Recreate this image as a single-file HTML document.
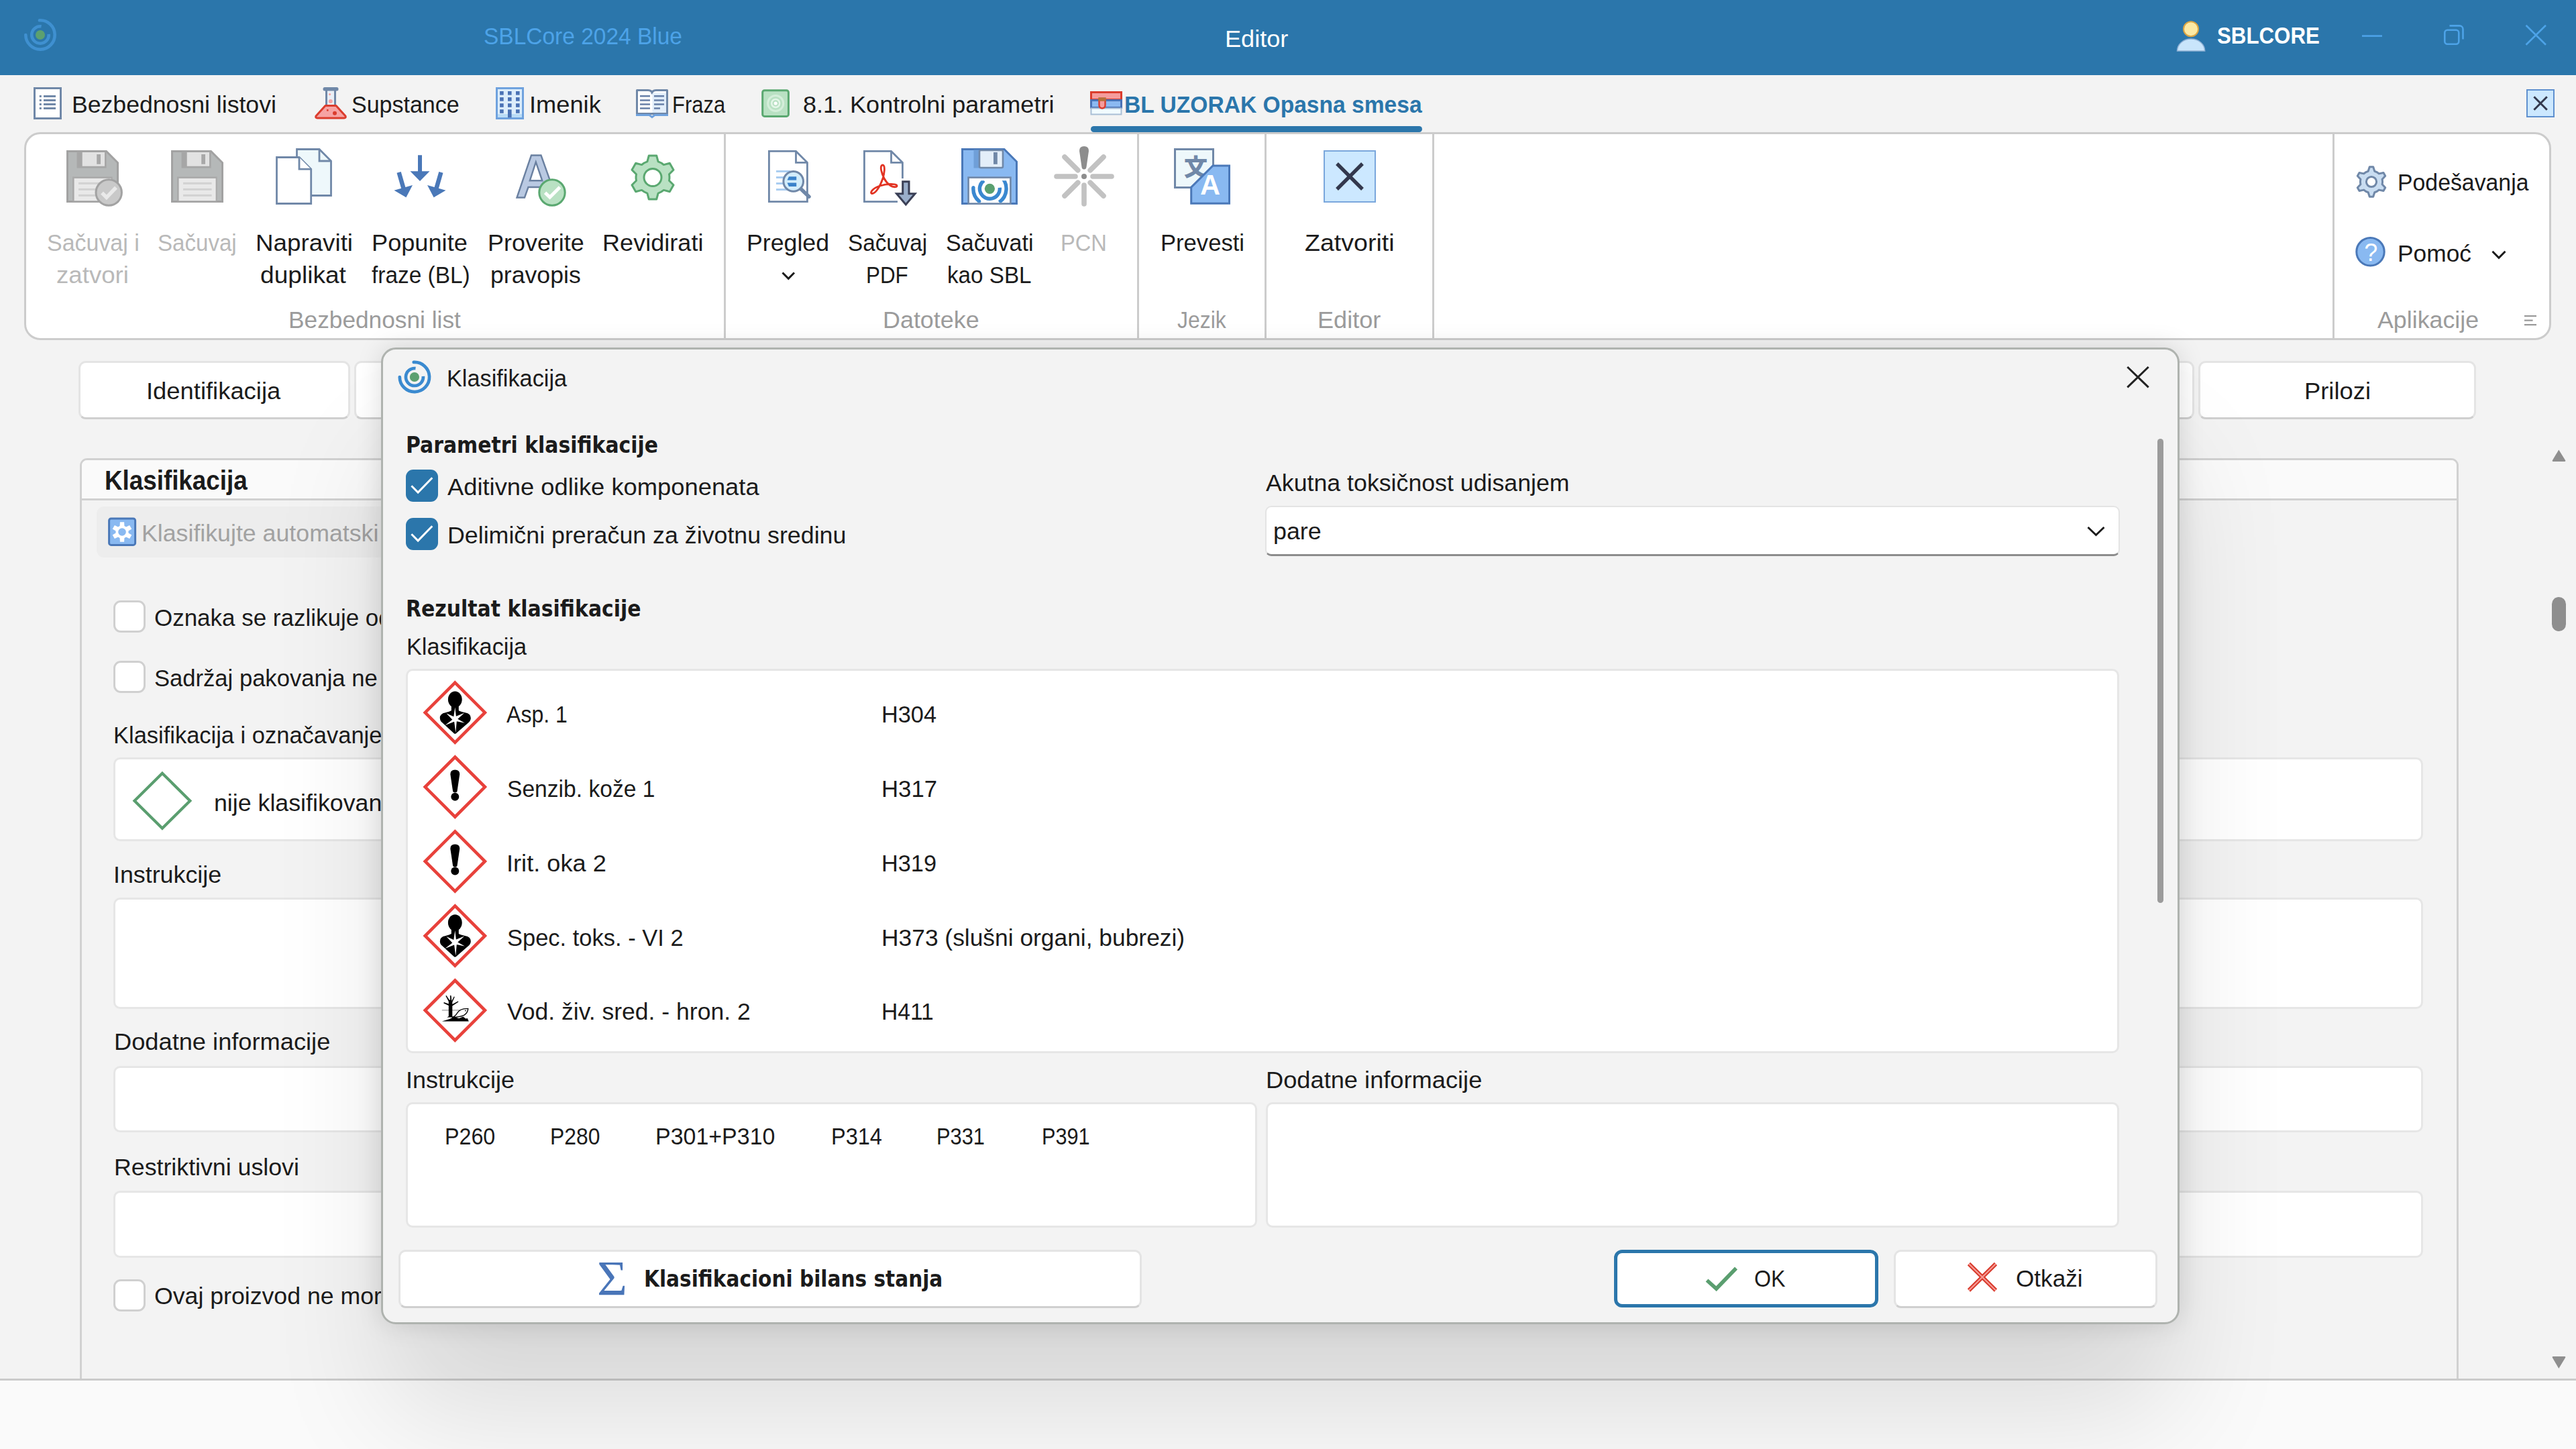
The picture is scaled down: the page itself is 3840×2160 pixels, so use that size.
<!DOCTYPE html>
<html lang="sr"><head><meta charset="utf-8"><title>SBLCore 2024 Blue - Editor</title>
<style>
html,body{margin:0;padding:0;background:#f3f3f3;}
body{width:3840px;height:2160px;overflow:hidden;font-family:"Liberation Sans",sans-serif;color:#1b1b1b;}
#app{position:relative;width:3840px;height:2160px;overflow:hidden;background:#f3f3f3;}
.t{position:absolute;white-space:pre;line-height:1;transform-origin:0 0;}
.a{position:absolute;box-sizing:border-box;}
svg{position:absolute;overflow:visible;}
.btn{background:#fff;border:3px solid #e4e4e4;border-bottom-color:#cfcfcf;border-radius:11px;}
.fld{background:#fff;border:3px solid #e6e6e6;border-radius:10px;}
.cb{background:#fff;border:3px solid #d0d0d0;border-radius:11px;}
.cbx{background:#2b76ab;border-radius:11px;}
.vsep{background:#cccccc;width:3px;}

</style></head><body>
<div id="app">
<!-- title bar -->
<div class="a" style="left:0;top:0;width:3840px;height:112px;background:#2b76ab"></div>
<!-- ribbon panel -->
<div class="a" style="left:36px;top:197px;width:3767px;height:310px;background:#fff;border:3px solid #cccccc;border-radius:24px"></div>
<div class="a vsep" style="left:1079px;top:200px;height:304px"></div>
<div class="a vsep" style="left:1695px;top:200px;height:304px"></div>
<div class="a vsep" style="left:1885px;top:200px;height:304px"></div>
<div class="a vsep" style="left:2135px;top:200px;height:304px"></div>
<div class="a vsep" style="left:3477px;top:200px;height:304px"></div>
<!-- active tab underline -->
<div class="a" style="left:1626px;top:188px;width:494px;height:9px;background:#2b76ab;border-radius:5px"></div>
<!-- tab close button -->
<div class="a" style="left:3766px;top:133px;width:42px;height:42px;background:#cce8ff;border:2px solid #5f90cf"></div>
<!-- Zatvoriti icon box -->
<div class="a" style="left:1973px;top:224px;width:78px;height:78px;background:#cce8ff;border:2px solid #7aa7dc"></div>
<!-- section buttons -->
<div class="a btn" style="left:117px;top:538px;width:405px;height:87px"></div>
<div class="a btn" style="left:528px;top:538px;width:405px;height:87px"></div>
<div class="a btn" style="left:2866px;top:538px;width:405px;height:87px"></div>
<div class="a btn" style="left:3277px;top:538px;width:414px;height:87px"></div>
<!-- group box -->
<div class="a" style="left:119px;top:683px;width:3546px;height:1500px;border:3px solid #d1d1d1;border-radius:11px;background:#f3f3f3"></div>
<div class="a" style="left:122px;top:686px;width:3540px;height:57px;background:#fafafa;border-radius:8px 8px 0 0;border-bottom:3px solid #d1d1d1;box-sizing:content-box"></div>
<!-- toolbar strip -->
<div class="a" style="left:144px;top:755px;width:3000px;height:76px;background:#ededed;border-radius:11px"></div>
<!-- checkboxes -->
<div class="a cb" style="left:169px;top:895px;width:48px;height:48px"></div>
<div class="a cb" style="left:169px;top:985px;width:48px;height:48px"></div>
<div class="a cb" style="left:169px;top:1907px;width:48px;height:48px"></div>
<!-- fields -->
<div class="a fld" style="left:169px;top:1129px;width:3443px;height:125px"></div>
<div class="a fld" style="left:169px;top:1338px;width:3443px;height:166px"></div>
<div class="a fld" style="left:169px;top:1589px;width:3443px;height:99px"></div>
<div class="a fld" style="left:169px;top:1775px;width:3443px;height:100px"></div>
<!-- main scrollbar -->
<svg style="left:3800px;top:660px" width="30" height="1400" viewBox="0 0 30 1400"><path d="M14.3 10.5 L24 26 Q25 28 23 28 L6 28 Q4 28 5 26 Z" fill="#8e8e8e"/><rect x="4" y="230" width="21" height="51" rx="10.5" fill="#8e8e8e"/><path d="M14.3 1380 L24 1364 Q25 1362 23 1362 L6 1362 Q4 1362 5 1364 Z" fill="#8e8e8e"/></svg>
<!-- bottom bar -->
<div class="a" style="left:0;top:2055px;width:3840px;height:105px;background:#fafafa;border-top:3px solid #cbcbcb"></div>

<svg style="left:0;top:0" width="3840" height="2160" viewBox="0 0 3840 2160">
<g fill="none" stroke="#3f90d0" stroke-width="4.6" opacity="1"><path d="M58.9 30.3A21.7 21.7 0 1 1 38.3 52.0" stroke-linecap="round"/><path d="M61.6 39.3A12.75 12.75 0 1 0 72.7 50.9"/></g><circle cx="60" cy="52" r="7.0" fill="#5ca070"/>
<path d="M3245.5 76 A20.6 18 0 0 1 3286.7 76 Z" fill="#c9e5fb" stroke="#8fb0d4" stroke-width="1.5"/>
<circle cx="3266" cy="43.2" r="11" fill="#fce9a4" stroke="#dba544" stroke-width="2"/>
<g fill="none" stroke="#4da3e8" stroke-width="2.6"><path d="M3521 53.6H3551"/><rect x="3644.3" y="44.7" width="21" height="21" rx="4"/><path d="M3651.5 38.4H3666.5a5 5 0 0 1 5 5V58.5" /><path d="M3765.5 37.8L3795 66.8M3795 37.8L3765.5 66.8"/></g>
<rect x="51.5" y="131.5" width="39" height="45" fill="#fff" stroke="#7088a8" stroke-width="3"/>
<path d="M58.8 143.4h3M65 143.4h18" stroke="#7088a8" stroke-width="3"/>
<path d="M58.8 149.5h3M65 149.5h18" stroke="#7088a8" stroke-width="3"/>
<path d="M58.8 155.5h3M65 155.5h18" stroke="#7088a8" stroke-width="3"/>
<path d="M58.8 161.5h3M65 161.5h18" stroke="#7088a8" stroke-width="3"/>
<rect x="485" y="136" width="16" height="22" fill="#e9eff6"/><path d="M486.5 134V157M499.5 134V157" stroke="#7088a8" stroke-width="3"/><rect x="481.5" y="130" width="23" height="5.5" rx="2.5" fill="#7088a8"/><path d="M485 157.5H501L515 173Q516 176 513 176H473Q470 176 471 173Z" fill="#f6a3a3" stroke="#db3c2d" stroke-width="3" stroke-linejoin="round"/><circle cx="491.6" cy="140.6" r="1.6" fill="#f6a3a3"/><circle cx="492.8" cy="151" r="3" fill="#f6a3a3"/><circle cx="499" cy="168.8" r="3" fill="#db3c2d"/><rect x="487" y="163" width="2.6" height="2.6" fill="#db3c2d"/>
<rect x="740.5" y="131.5" width="39" height="45" fill="#dcedfb" stroke="#6fa2de" stroke-width="3"/><rect x="742" y="170" width="36" height="5" fill="#b9dcf7"/>
<rect x="745.1" y="136.0" width="5.6" height="5.6" fill="#4a72b5"/>
<rect x="745.1" y="145.1" width="5.6" height="5.6" fill="#4a72b5"/>
<rect x="745.1" y="154.2" width="5.6" height="5.6" fill="#4a72b5"/>
<rect x="745.1" y="163.2" width="5.6" height="5.6" fill="#4a72b5"/>
<rect x="757.0" y="136.0" width="5.6" height="5.6" fill="#4a72b5"/>
<rect x="757.0" y="145.1" width="5.6" height="5.6" fill="#4a72b5"/>
<rect x="757.0" y="154.2" width="5.6" height="5.6" fill="#4a72b5"/>
<rect x="769.0" y="136.0" width="5.6" height="5.6" fill="#4a72b5"/>
<rect x="769.0" y="145.1" width="5.6" height="5.6" fill="#4a72b5"/>
<rect x="769.0" y="154.2" width="5.6" height="5.6" fill="#4a72b5"/>
<rect x="769.0" y="163.2" width="5.6" height="5.6" fill="#4a72b5"/>
<rect x="757" y="163.3" width="5.6" height="12" fill="#4a72b5"/>
<path d="M949.5 134.5H966Q972 135 972 139Q972 135 978 134.5H994.5V169.5H949.5Z" fill="#fff" stroke="#7088a8" stroke-width="3" stroke-linejoin="round"/><path d="M972.5 139H993V168H972.5Z" fill="#e2eefa"/><path d="M948 171.5H968L972 174.5L976 171.5H996" fill="none" stroke="#6fa2de" stroke-width="3"/>
<path d="M954 143.3h15M975 143.3h15" stroke="#6880a8" stroke-width="2.6"/>
<path d="M954 149.5h15M975 149.5h15" stroke="#6880a8" stroke-width="2.6"/>
<path d="M954 155.5h15M975 155.5h15" stroke="#6880a8" stroke-width="2.6"/>
<path d="M954 161.5h15M975 161.5h9" stroke="#6880a8" stroke-width="2.6"/>
<rect x="1136.7" y="134.8" width="38.7" height="38.6" rx="3" fill="#b9e1c3" stroke="#5aa870" stroke-width="3"/><circle cx="1156.2" cy="154" r="11.5" fill="none" stroke="#d4eeda" stroke-width="3"/><circle cx="1156.2" cy="154" r="6" fill="none" stroke="#e4f6e8" stroke-width="2.5"/><circle cx="1156.2" cy="154" r="2.6" fill="#fff"/>
<rect x="1626.5" y="137.5" width="45" height="11" fill="#f59c9c" stroke="#db3c2d" stroke-width="3"/><rect x="1626.5" y="149.5" width="45" height="11" fill="#8bb9f1" stroke="#4a72b5" stroke-width="3"/><rect x="1626.5" y="161.5" width="45" height="9" fill="#f1fbff" stroke="#a9bfd6" stroke-width="2"/><path d="M1638.5 149V157Q1638.5 161 1643 161.5Q1647.5 161 1647.5 157V149Z" fill="#f59c9c" stroke="#db3c2d" stroke-width="2.4"/><rect x="1637.3" y="145.2" width="11.4" height="5.5" fill="#b5703a"/>
<path d="M3777.4 144.3L3796.8 163.7M3796.8 144.3L3777.4 163.7" stroke="#33384d" stroke-width="3"/>
<path d="M100.5 225.5H158.5L175.5 242.5V300.5H100.5Z" fill="#b5b8b8" stroke="#a2a2a2" stroke-width="3"/><rect x="114.6" y="226" width="44" height="24.5" fill="#a6a6a6"/><rect x="122.7" y="227" width="33.3" height="20.7" fill="#e2e2e2"/><rect x="144.2" y="230" width="5.8" height="14.7" fill="#a8a8a8"/><rect x="108" y="263.4" width="59.6" height="37" fill="#a9a9a9"/><rect x="110.6" y="265.9" width="55" height="33.3" fill="#e9e9e9"/><rect x="117" y="271.8" width="42.6" height="3" fill="#d2d2d2"/><rect x="117" y="280.8" width="42.6" height="3" fill="#d2d2d2"/><rect x="117" y="289.8" width="42.6" height="3" fill="#d2d2d2"/>
<circle cx="162.2" cy="287" r="19.2" fill="#c9c9c9" stroke="#a2a2a2" stroke-width="3"/><path d="M152 287.5L158.8 294.3L173 279.5" fill="none" stroke="#e9e9e9" stroke-width="5.5"/>
<path d="M256.5 225.5H314.5L331.5 242.5V300.5H256.5Z" fill="#b5b8b8" stroke="#a2a2a2" stroke-width="3"/><rect x="270.6" y="226" width="44" height="24.5" fill="#a6a6a6"/><rect x="278.7" y="227" width="33.3" height="20.7" fill="#e2e2e2"/><rect x="300.2" y="230" width="5.8" height="14.7" fill="#a8a8a8"/><rect x="264" y="263.4" width="59.6" height="37" fill="#a9a9a9"/><rect x="266.6" y="265.9" width="55" height="33.3" fill="#e9e9e9"/><rect x="273" y="271.8" width="42.6" height="3" fill="#d2d2d2"/><rect x="273" y="280.8" width="42.6" height="3" fill="#d2d2d2"/><rect x="273" y="289.8" width="42.6" height="3" fill="#d2d2d2"/>
<path d="M442.5 222.5H476L493.5 240V291.5H442.5Z" fill="#eef8fb" stroke="#7088a8" stroke-width="2.8" stroke-linejoin="miter"/><path d="M476 222.5V240H493.5" fill="none" stroke="#7088a8" stroke-width="2.8"/><path d="M412.5 234.5H446L463.7 252.2V303.5H412.5Z" fill="#fff" stroke="#7088a8" stroke-width="2.8"/><path d="M446 234.5V252.2H463.7" fill="#fff" stroke="#7088a8" stroke-width="2.8"/>
<path d="M623.0 231.3L623.0 255.3L611.5 255.3L626.0 270.0L640.5 255.3L629.0 255.3L629.0 231.3Z" fill="#4a78b8"/>
<path d="M591.5 257.7L598.1 280.8L587.5 283.8L605.4 294.3L615.0 275.9L604.4 279.0L597.7 255.9Z" fill="#4a78b8"/>
<path d="M654.3 255.9L647.6 279.0L637.0 275.9L646.6 294.3L664.5 283.8L653.9 280.8L660.5 257.7Z" fill="#4a78b8"/>
<path d="M792 231.5H806.5L829 294.5H816L810.8 279H787.5L782 294.5H770.5Z M789.8 269.3H808.3L798.8 241.5Z" fill="#b9c9e2" stroke="#6a80a0" stroke-width="2.4" fill-rule="evenodd"/>
<circle cx="823" cy="287" r="19.2" fill="#b9e1c3" stroke="#5aa870" stroke-width="3"/><path d="M812.6 287.2L819.6 294L834.6 279" fill="none" stroke="#fff" stroke-width="5"/>
<path d="M964.9 240.9L967.3 232.0L978.7 232.0L981.1 240.9A25 25 0 0 1 989.4 245.6L998.3 243.3L1004.0 253.2L997.5 259.7A25 25 0 0 1 997.5 269.3L1004.0 275.8L998.3 285.7L989.4 283.4A25 25 0 0 1 981.1 288.1L978.7 297.0L967.3 297.0L964.9 288.1A25 25 0 0 1 956.6 283.4L947.7 285.7L942.0 275.8L948.5 269.3A25 25 0 0 1 948.5 259.7L942.0 253.2L947.7 243.3L956.6 245.6A25 25 0 0 1 964.9 240.9Z" fill="#b9e1c3" stroke="#5aa870" stroke-width="3" stroke-linejoin="round"/><circle cx="973" cy="264.5" r="13" fill="#fff" stroke="#5aa870" stroke-width="3"/>
<path d="M1146.4 225.4H1186.5L1203.4 242.3V300.6H1146.4Z" fill="#fff" stroke="#7088a8" stroke-width="2.8"/><path d="M1186.5 225.4V242.3H1203.4" fill="none" stroke="#7088a8" stroke-width="2.8"/>
<path d="M1157 255.4H1178" stroke="#a9cdf1" stroke-width="3"/>
<path d="M1157 264.5H1178" stroke="#a9cdf1" stroke-width="3"/>
<path d="M1157 273.5H1178" stroke="#a9cdf1" stroke-width="3"/>
<path d="M1157 282.6H1178" stroke="#a9cdf1" stroke-width="3"/>
<path d="M1194 281.8L1206 293.2" stroke="#7088a8" stroke-width="5.5" stroke-linecap="round"/><circle cx="1182.7" cy="270.4" r="14.8" fill="#d3edfb" stroke="#7088a8" stroke-width="3"/><path d="M1176 263.2H1187.2V268.6H1173.5Z M1173.5 272.6H1187.2V278H1176Z" fill="#3a82ca"/>
<path d="M1345.4 266V242.3L1328.5 225.4H1288.4V300.6H1338" fill="#fff" stroke="#7088a8" stroke-width="2.8"/><path d="M1328.5 225.4V242.3H1345.4" fill="none" stroke="#7088a8" stroke-width="2.8"/>
<path d="M1318 266C1314 258 1311 247 1315.5 246C1320 245.5 1318.5 258 1316 266C1312 278 1305 289 1299.5 288.5C1296 287 1302 280 1312 277C1322 274 1333 273.5 1336.5 276C1339 279 1332 280 1327 276.5C1323 273.5 1320 270 1318 266Z" fill="none" stroke="#e23322" stroke-width="2.8" stroke-linejoin="round"/>
<path d="M1345.7 270.8H1355V288.8H1364L1350.3 305L1336.6 288.8H1345.7Z" fill="#9aaeca" stroke="#3a3f55" stroke-width="3"/>
<path d="M1434.5 222.5H1497L1515.5 241V303.5H1434.5Z" fill="#89b9f1" stroke="#4a78b8" stroke-width="3"/><rect x="1451.5" y="223.5" width="8" height="27" fill="#6f9fd8"/><rect x="1460" y="224" width="35" height="26" rx="2" fill="#e3eef9" stroke="#6f88a8" stroke-width="2.6"/><rect x="1481" y="227" width="5.8" height="17.8" fill="#7088a8"/><rect x="1443.6" y="264.6" width="62.8" height="39" fill="#fff" stroke="#7088a8" stroke-width="2.6"/><circle cx="1475.4" cy="281.3" r="7.6" fill="#5aa070"/><clipPath id="sblc"><rect x="1445" y="269.3" width="60.5" height="33"/></clipPath><g fill="none" stroke="#3a88d0" stroke-width="5.4" clip-path="url(#sblc)"><path d="M1490.3 279.7A15 15 0 1 1 1466.8 269.0"/><path d="M1450.9 279.6A24.6 24.6 0 0 0 1459.6 300.1" stroke-linecap="round"/><path d="M1492.8 263.9A24.6 24.6 0 0 1 1489.5 301.5"/></g>
<path d="M1629.0 263.0L1657.0 263.0M1625.2 272.2L1645.0 292.0M1606.8 272.2L1587.0 292.0M1603.0 263.0L1575.0 263.0M1606.8 253.8L1587.0 234.0M1625.2 253.8L1645.0 234.0M1616.0 276.0L1616.0 304.0" stroke="#c2c2c2" stroke-width="7.6" stroke-linecap="round" fill="none"/><path d="M1609 225Q1609 218 1616 218Q1623 218 1623 225L1619.5 249Q1619 252.5 1616 252.5Q1613 252.5 1612.5 249Z" fill="#8d8d8d"/><circle cx="1616" cy="263" r="4" fill="#8d8d8d"/>
<rect x="1751.5" y="222.5" width="57" height="57" fill="#eef8fb" stroke="#7088a8" stroke-width="3"/><text x="1765" y="262" font-family="Noto Sans CJK JP, sans-serif" font-weight="900" font-size="35" fill="#7088a8">文</text><path d="M1808 247H1832.5V303.2H1775.7V279.2Z" fill="#89b9f1" stroke="#4a78b8" stroke-width="3"/><text x="1789" y="290.2" font-family="Liberation Sans, sans-serif" font-weight="700" font-size="43" fill="#fff" textLength="30" lengthAdjust="spacingAndGlyphs">A</text>
<path d="M1993 244L2031 282M2031 244L1993 282" stroke="#33384d" stroke-width="5.4"/>
<path d="M1166.5 406.5L1175.3 415.3L1184 406.5" fill="none" stroke="#1b1b1b" stroke-width="3"/>
<path d="M3715.5 374.8L3725 384.3L3734.5 374.8" fill="none" stroke="#1b1b1b" stroke-width="3"/>
<path d="M3530.2 255.2L3532.3 248.7L3537.7 248.7L3539.8 255.2A16.5 16.5 0 0 1 3546.3 258.9L3553.0 257.5L3555.7 262.2L3551.1 267.3A16.5 16.5 0 0 1 3551.1 274.7L3555.7 279.8L3553.0 284.5L3546.3 283.1A16.5 16.5 0 0 1 3539.8 286.8L3537.7 293.3L3532.3 293.3L3530.2 286.8A16.5 16.5 0 0 1 3523.7 283.1L3517.0 284.5L3514.3 279.8L3518.9 274.7A16.5 16.5 0 0 1 3518.9 267.3L3514.3 262.2L3517.0 257.5L3523.7 258.9A16.5 16.5 0 0 1 3530.2 255.2Z" fill="#c9ddf1" stroke="#7088a8" stroke-width="3" stroke-linejoin="round"/><circle cx="3535" cy="271" r="7.6" fill="#fff" stroke="#7088a8" stroke-width="3"/>
<circle cx="3533.5" cy="375.3" r="20.7" fill="#89b9f1" stroke="#4a78b8" stroke-width="3"/><text x="3524.2" y="388.5" font-family="Liberation Sans, sans-serif" font-size="36" fill="#fff">?</text>
<path d="M3763 471.2H3781M3763 477.7H3775.6M3763 484.1H3781" stroke="#9a9a9a" stroke-width="2.2"/>
<rect x="162.6" y="773" width="39" height="39.4" rx="3" fill="#89b9f1" stroke="#4a78b8" stroke-width="3"/><path d="M178.6 784.1L178.9 778.3L185.1 778.3L185.4 784.1A9.5 9.5 0 0 1 188.0 785.6L193.1 783.0L196.3 788.4L191.4 791.5A9.5 9.5 0 0 1 191.4 794.5L196.3 797.6L193.1 803.0L188.0 800.4A9.5 9.5 0 0 1 185.4 801.9L185.1 807.7L178.9 807.7L178.6 801.9A9.5 9.5 0 0 1 176.0 800.4L170.9 803.0L167.7 797.6L172.6 794.5A9.5 9.5 0 0 1 172.6 791.5L167.7 788.4L170.9 783.0L176.0 785.6A9.5 9.5 0 0 1 178.6 784.1Z" fill="#fff"/><circle cx="182" cy="793" r="5.8" fill="#89b9f1"/>
<path d="M241.9 1152.7L283.3 1193.7L241.9 1234.7L200.5 1193.7Z" fill="none" stroke="#5a9e6f" stroke-width="4.2"/>
</svg>
<div class="tx">
<span class="t" style='left:720.9px;top:36.5px;font-size:35.5px;color:#4da3e8;transform:scaleX(0.9431);'>SBLCore 2024 Blue</span>
<span class="t" style='left:1825.5px;top:40.9px;font-size:35.5px;color:#ffffff;transform:scaleX(1.0174);'>Editor</span>
<span class="t" style='left:3304.8px;top:36.2px;font-size:35.5px;font-weight:700;color:#ffffff;transform:scaleX(0.8808);'>SBLCORE</span>
<span class="t" style='left:107.0px;top:138.6px;font-size:35.5px;transform:scaleX(1.0033);'>Bezbednosni listovi</span>
<span class="t" style='left:524.0px;top:138.6px;font-size:35.5px;transform:scaleX(0.9577);'>Supstance</span>
<span class="t" style='left:788.9px;top:138.6px;font-size:35.5px;transform:scaleX(1.0215);'>Imenik</span>
<span class="t" style='left:1001.7px;top:138.6px;font-size:35.5px;transform:scaleX(0.8730);'>Fraza</span>
<span class="t" style='left:1196.8px;top:138.6px;font-size:35.5px;transform:scaleX(1.0147);'>8.1. Kontrolni parametri</span>
<span class="t" style='left:1675.5px;top:138.6px;font-size:35.5px;font-weight:700;color:#2b76ab;transform:scaleX(0.9462);'>BL UZORAK Opasna smesa</span>
<span class="t" style='left:70.0px;top:345.2px;font-size:35.5px;color:#b9b9b9;transform:scaleX(0.9564);'>Sačuvaj i</span>
<span class="t" style='left:84.0px;top:393.1px;font-size:35.5px;color:#b9b9b9;transform:scaleX(1.0327);'>zatvori</span>
<span class="t" style='left:235.1px;top:345.2px;font-size:35.5px;color:#b9b9b9;transform:scaleX(0.9319);'>Sačuvaj</span>
<span class="t" style='left:380.9px;top:345.2px;font-size:35.5px;transform:scaleX(1.0353);'>Napraviti</span>
<span class="t" style='left:388.0px;top:393.1px;font-size:35.5px;transform:scaleX(1.0453);'>duplikat</span>
<span class="t" style='left:554.0px;top:345.2px;font-size:35.5px;transform:scaleX(1.0189);'>Popunite</span>
<span class="t" style='left:554.0px;top:393.1px;font-size:35.5px;transform:scaleX(0.9414);'>fraze (BL)</span>
<span class="t" style='left:727.0px;top:345.2px;font-size:35.5px;transform:scaleX(1.0121);'>Proverite</span>
<span class="t" style='left:731.0px;top:393.1px;font-size:35.5px;transform:scaleX(1.0043);'>pravopis</span>
<span class="t" style='left:898.0px;top:345.2px;font-size:35.5px;transform:scaleX(1.0168);'>Revidirati</span>
<span class="t" style='left:1113.4px;top:345.2px;font-size:35.5px;transform:scaleX(1.0058);'>Pregled</span>
<span class="t" style='left:1264.0px;top:345.2px;font-size:35.5px;transform:scaleX(0.9359);'>Sačuvaj</span>
<span class="t" style='left:1291.0px;top:393.1px;font-size:35.5px;transform:scaleX(0.8841);'>PDF</span>
<span class="t" style='left:1410.0px;top:345.2px;font-size:35.5px;transform:scaleX(0.9589);'>Sačuvati</span>
<span class="t" style='left:1412.1px;top:393.1px;font-size:35.5px;transform:scaleX(0.9357);'>kao SBL</span>
<span class="t" style='left:1581.2px;top:345.2px;font-size:35.5px;color:#b9b9b9;transform:scaleX(0.9187);'>PCN</span>
<span class="t" style='left:1729.5px;top:345.2px;font-size:35.5px;transform:scaleX(0.9747);'>Prevesti</span>
<span class="t" style='left:1944.9px;top:345.2px;font-size:35.5px;transform:scaleX(1.0579);'>Zatvoriti</span>
<span class="t" style='left:429.5px;top:459.9px;font-size:35.5px;color:#9b9b9b;transform:scaleX(0.9935);'>Bezbednosni list</span>
<span class="t" style='left:1315.8px;top:459.9px;font-size:35.5px;color:#9b9b9b;transform:scaleX(1.0112);'>Datoteke</span>
<span class="t" style='left:1754.6px;top:459.9px;font-size:35.5px;color:#9b9b9b;transform:scaleX(0.8998);'>Jezik</span>
<span class="t" style='left:1963.5px;top:459.9px;font-size:35.5px;color:#9b9b9b;transform:scaleX(1.0174);'>Editor</span>
<span class="t" style='left:3544.0px;top:459.9px;font-size:35.5px;color:#9b9b9b;transform:scaleX(1.0073);'>Aplikacije</span>
<span class="t" style='left:3573.9px;top:254.9px;font-size:35.5px;transform:scaleX(0.9522);'>Podešavanja</span>
<span class="t" style='left:3573.8px;top:361.2px;font-size:35.5px;transform:scaleX(0.9950);'>Pomoć</span>
<span class="t" style='left:217.5px;top:565.9px;font-size:35.5px;transform:scaleX(1.0249);'>Identifikacija</span>
<span class="t" style='left:3435.0px;top:565.9px;font-size:35.5px;transform:scaleX(1.0241);'>Prilozi</span>
<span class="t" style='left:156.0px;top:695.5px;font-size:41px;font-weight:700;transform:scaleX(0.8970);'>Klasifikacija</span>
<span class="t" style='left:210.6px;top:778.2px;font-size:35.5px;color:#a2a2a2;transform:scaleX(1.0060);'>Klasifikujte automatski</span>
<span class="t" style='left:230.0px;top:904.1px;font-size:35.5px;transform:scaleX(0.9849);'>Oznaka se razlikuje od</span>
<span class="t" style='left:230.0px;top:993.5px;font-size:35.5px;transform:scaleX(0.9744);'>Sadržaj pakovanja ne</span>
<span class="t" style='left:169.2px;top:1078.8px;font-size:35.5px;transform:scaleX(0.9708);'>Klasifikacija i označavanje</span>
<span class="t" style='left:318.5px;top:1179.5px;font-size:35.5px;transform:scaleX(1.0066);'>nije klasifikovan</span>
<span class="t" style='left:169.2px;top:1286.8px;font-size:35.5px;transform:scaleX(1.0080);'>Instrukcije</span>
<span class="t" style='left:170.0px;top:1536.3px;font-size:35.5px;transform:scaleX(1.0208);'>Dodatne informacije</span>
<span class="t" style='left:170.0px;top:1723.3px;font-size:35.5px;transform:scaleX(1.0062);'>Restriktivni uslovi</span>
<span class="t" style='left:230.0px;top:1914.9px;font-size:35.5px;transform:scaleX(1.0045);'>Ovaj proizvod ne mora</span>
</div>
<!-- dialog -->
<div class="a" id="dlg" style="left:568px;top:518px;width:2681px;height:1456px;background:#f3f3f3;border:3px solid #afb3af;border-radius:22px;box-shadow:0 146px 181px -15px rgba(0,0,0,0.118), 0 0 38px 0 rgba(0,0,0,0.13)"></div>
<!-- checked boxes -->
<div class="a cbx" style="left:605px;top:700px;width:48px;height:48px"></div>
<div class="a cbx" style="left:605px;top:772px;width:48px;height:48px"></div>
<!-- combo -->
<div class="a" style="left:1886px;top:754px;width:1274px;height:75px;background:#fff;border:2px solid #e4e4e4;border-bottom:3px solid #8c8c8c;border-radius:9px"></div>
<!-- list box -->
<div class="a fld" style="left:605px;top:997px;width:2554px;height:573px"></div>
<!-- P box and extra info box -->
<div class="a fld" style="left:605px;top:1643px;width:1269px;height:187px"></div>
<div class="a fld" style="left:1887px;top:1643px;width:1272px;height:187px"></div>
<!-- buttons -->
<div class="a btn" style="left:594px;top:1863px;width:1108px;height:87px"></div>
<div class="a" style="left:2406px;top:1863px;width:394px;height:86px;background:#fff;border:5px solid #2b76ab;border-radius:12px"></div>
<div class="a btn" style="left:2823px;top:1863px;width:393px;height:87px"></div>
<!-- dialog scrollbar -->
<div class="a" style="left:3216px;top:654px;width:9px;height:692px;background:#9b9b9b;border-radius:5px"></div>

<svg style="left:0;top:0" width="3840" height="2160" viewBox="0 0 3840 2160">
<g fill="none" stroke="#3a8ad0" stroke-width="4.7" opacity="1"><path d="M616.7 539.9A22.134 22.134 0 1 1 595.8 562.0" stroke-linecap="round"/><path d="M619.5 549.1A13.005 13.005 0 1 0 630.9 560.9"/></g><circle cx="617.9" cy="562" r="7.1" fill="#5ca070"/>
<path d="M3171.3 547L3202.7 577.3M3202.7 547L3171.3 577.3" stroke="#222" stroke-width="3"/>
<path d="M613.4 724.3L623.1 734.0L644.3 712.1999999999999" fill="none" stroke="#fff" stroke-width="3"/>
<path d="M613.4 796.3L623.1 806.0L644.3 784.1999999999999" fill="none" stroke="#fff" stroke-width="3"/>
<path d="M3112.5 786L3124.5 797.5L3136.5 786" fill="none" stroke="#1b1b1b" stroke-width="3"/>
<path d="M678.3 1017.6L722.9 1062.2L678.3 1106.8L633.6999999999999 1062.2Z" fill="#fff" stroke="#e8413b" stroke-width="4.6"/><g transform="translate(678.3,1062.2)"><ellipse cx="0" cy="-19.5" rx="10.4" ry="12.2" fill="#000"/><path d="M-5.5 -10V-3Q-8 -1.5 -14 0Q-23 1.5 -22.5 8.5Q-22 13 -19 15L-1 31.5L1 31.5L20 15Q23.5 12 23.5 8Q23.5 1.5 15 0Q8 -1.5 5.5 -3V-10Z" fill="#000"/><path d="M0 -8L1.6 5.5L14 0.5L4 9.5L14.5 15.5L2.5 13L1 30L-1.2 13.5L-15 19L-4 10.5L-13 1L-2 6Z" fill="#fff"/></g>
<path d="M678.3 1128.5L722.9 1173.1L678.3 1217.6999999999998L633.6999999999999 1173.1Z" fill="#fff" stroke="#e8413b" stroke-width="4.6"/><g transform="translate(678.3,1173.1)"><path d="M-7 -19Q-7 -25.5 0 -25.5Q7 -25.5 7 -19L3.2 6.5Q2.8 8.5 0 8.5Q-2.8 8.5 -3.2 6.5Z" fill="#000"/><circle cx="0" cy="14.6" r="6" fill="#000"/></g>
<path d="M678.3 1239.4L722.9 1284L678.3 1328.6L633.6999999999999 1284Z" fill="#fff" stroke="#e8413b" stroke-width="4.6"/><g transform="translate(678.3,1284)"><path d="M-7 -19Q-7 -25.5 0 -25.5Q7 -25.5 7 -19L3.2 6.5Q2.8 8.5 0 8.5Q-2.8 8.5 -3.2 6.5Z" fill="#000"/><circle cx="0" cy="14.6" r="6" fill="#000"/></g>
<path d="M678.3 1350.4L722.9 1395L678.3 1439.6L633.6999999999999 1395Z" fill="#fff" stroke="#e8413b" stroke-width="4.6"/><g transform="translate(678.3,1395)"><ellipse cx="0" cy="-19.5" rx="10.4" ry="12.2" fill="#000"/><path d="M-5.5 -10V-3Q-8 -1.5 -14 0Q-23 1.5 -22.5 8.5Q-22 13 -19 15L-1 31.5L1 31.5L20 15Q23.5 12 23.5 8Q23.5 1.5 15 0Q8 -1.5 5.5 -3V-10Z" fill="#000"/><path d="M0 -8L1.6 5.5L14 0.5L4 9.5L14.5 15.5L2.5 13L1 30L-1.2 13.5L-15 19L-4 10.5L-13 1L-2 6Z" fill="#fff"/></g>
<path d="M678.3 1461.5L722.9 1506.1L678.3 1550.6999999999998L633.6999999999999 1506.1Z" fill="#fff" stroke="#e8413b" stroke-width="4.6"/><g transform="translate(678.3,1506.1)"><path d="M-19.5 -0.3H12" stroke="#9a9a9a" stroke-width="1.2"/><path d="M-9.5 9V-7L-17 -10.5L-16.5 -12L-9.5 -9.5V-13L-14 -21.5L-12.8 -22L-8.5 -15.5L-7 -15.5L-7.5 -22L-5.8 -22L-5 -14L-1.5 -20.5L-0.5 -20L-4 -12V-9L4.5 -13.5L5.2 -12.5L-4 -6.5V9L-2 10.5H-12Z" fill="#000"/><path d="M-19.5 16.5L-8 13L-2 10L6 12L12 9.5L16 12.5L18.5 12L20.5 16.5Z" fill="#000"/><path d="M-4.5 10.5Q0 9.5 4 3Q8 -3 19.5 -2.5Q19 4 13 7.5Q7 10 -4.5 10.5Z" fill="#fff" stroke="#000" stroke-width="1.3"/><circle cx="15.5" cy="0.5" r="0.9" fill="#000"/></g>
<text x="890" y="1930.8" font-family="Liberation Serif, serif" font-size="73.5" fill="#4975b8" textLength="45" lengthAdjust="spacingAndGlyphs">Σ</text>
<path d="M2544.5 1908.5L2558.5 1921L2588 1890.5" fill="none" stroke="#5a9e6f" stroke-width="5.6"/>
<path d="M2935 1884L2975 1923.5M2975 1884L2935 1923.5" stroke="#d8392b" stroke-width="6"/><path d="M2935 1884L2975 1923.5M2975 1884L2935 1923.5" stroke="#f79a94" stroke-width="2.2"/>
</svg>
<div class="tx">
<span class="t" style='left:666.0px;top:546.9px;font-size:35.5px;transform:scaleX(0.9656);'>Klasifikacija</span>
<span class="t" style='left:604.7px;top:647.0px;font-size:33px;font-weight:700;font-family:"DejaVu Sans", "Liberation Sans", sans-serif;transform:scaleX(0.9050);'>Parametri klasifikacije</span>
<span class="t" style='left:666.5px;top:708.7px;font-size:35.5px;transform:scaleX(1.0236);'>Aditivne odlike komponenata</span>
<span class="t" style='left:667.4px;top:780.5px;font-size:35.5px;transform:scaleX(1.0075);'>Delimični preračun za životnu sredinu</span>
<span class="t" style='left:1887.0px;top:702.9px;font-size:35.5px;transform:scaleX(1.0060);'>Akutna toksičnost udisanjem</span>
<span class="t" style='left:1897.5px;top:774.8px;font-size:35.5px;transform:scaleX(1.0087);'>pare</span>
<span class="t" style='left:604.7px;top:890.6px;font-size:33px;font-weight:700;font-family:"DejaVu Sans", "Liberation Sans", sans-serif;transform:scaleX(0.9063);'>Rezultat klasifikacije</span>
<span class="t" style='left:605.9px;top:947.4px;font-size:35.5px;transform:scaleX(0.9656);'>Klasifikacija</span>
<span class="t" style='left:755.4px;top:1047.8px;font-size:35.5px;transform:scaleX(0.9029);'>Asp. 1</span>
<span class="t" style='left:755.7px;top:1158.6px;font-size:35.5px;transform:scaleX(0.9467);'>Senzib. kože 1</span>
<span class="t" style='left:754.5px;top:1269.5px;font-size:35.5px;transform:scaleX(1.0194);'>Irit. oka 2</span>
<span class="t" style='left:755.6px;top:1380.5px;font-size:35.5px;transform:scaleX(0.9714);'>Spec. toks. - VI 2</span>
<span class="t" style='left:755.6px;top:1491.4px;font-size:35.5px;transform:scaleX(1.0007);'>Vod. živ. sred. - hron. 2</span>
<span class="t" style='left:1313.7px;top:1047.8px;font-size:35.5px;transform:scaleX(0.9668);'>H304</span>
<span class="t" style='left:1313.6px;top:1158.6px;font-size:35.5px;transform:scaleX(0.9788);'>H317</span>
<span class="t" style='left:1313.7px;top:1269.5px;font-size:35.5px;transform:scaleX(0.9668);'>H319</span>
<span class="t" style='left:1313.6px;top:1380.5px;font-size:35.5px;transform:scaleX(0.9962);'>H373 (slušni organi, bubrezi)</span>
<span class="t" style='left:1313.7px;top:1491.4px;font-size:35.5px;transform:scaleX(0.9460);'>H411</span>
<span class="t" style='left:604.8px;top:1592.8px;font-size:35.5px;transform:scaleX(1.0131);'>Instrukcije</span>
<span class="t" style='left:1886.5px;top:1592.8px;font-size:35.5px;transform:scaleX(1.0208);'>Dodatne informacije</span>
<span class="t" style='left:663.1px;top:1676.7px;font-size:35.5px;transform:scaleX(0.9069);'>P260</span>
<span class="t" style='left:820.3px;top:1676.7px;font-size:35.5px;transform:scaleX(0.8981);'>P280</span>
<span class="t" style='left:976.6px;top:1676.7px;font-size:35.5px;transform:scaleX(0.9564);'>P301+P310</span>
<span class="t" style='left:1238.9px;top:1676.7px;font-size:35.5px;transform:scaleX(0.9156);'>P314</span>
<span class="t" style='left:1395.8px;top:1676.7px;font-size:35.5px;transform:scaleX(0.8682);'>P331</span>
<span class="t" style='left:1552.9px;top:1676.7px;font-size:35.5px;transform:scaleX(0.8645);'>P391</span>
<span class="t" style='left:960.3px;top:1890.4px;font-size:33px;font-weight:700;font-family:"DejaVu Sans", "Liberation Sans", sans-serif;transform:scaleX(0.8969);'>Klasifikacioni bilans stanja</span>
<span class="t" style='left:2614.5px;top:1888.7px;font-size:35.5px;transform:scaleX(0.9049);'>OK</span>
<span class="t" style='left:3005.0px;top:1888.7px;font-size:35.5px;transform:scaleX(0.9896);'>Otkaži</span>
</div>
</div>
</body></html>
